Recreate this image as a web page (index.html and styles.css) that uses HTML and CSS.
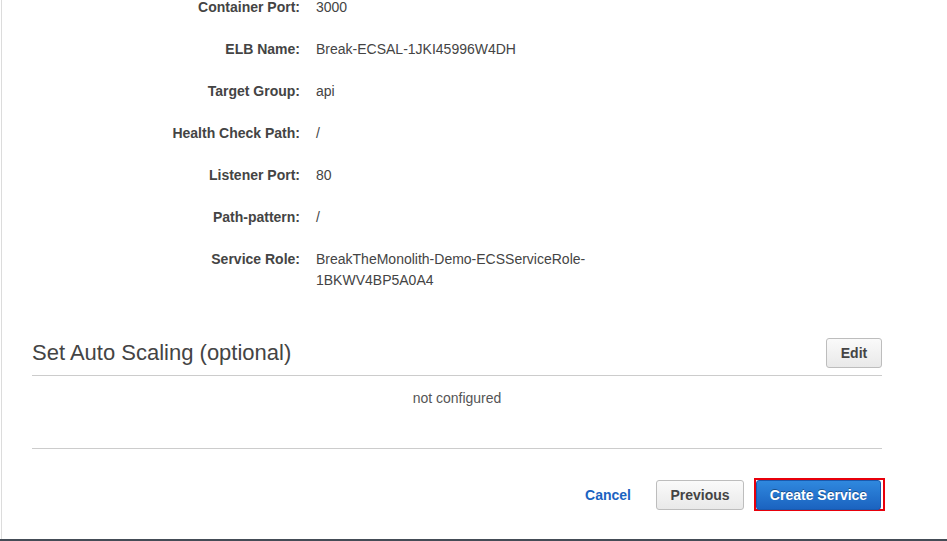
FILE: index.html
```html
<!DOCTYPE html>
<html lang="en">
<head>
<meta charset="utf-8">
<title>Review - Create Service</title>
<link rel="stylesheet" href="styles.css">
</head>
<body>
<div class="page">
  <div class="content">
    <div class="details">
      <div class="row"><div class="label">Container Port:</div><div class="value">3000</div></div>
      <div class="row"><div class="label">ELB Name:</div><div class="value">Break-ECSAL-1JKI45996W4DH</div></div>
      <div class="row"><div class="label">Target Group:</div><div class="value">api</div></div>
      <div class="row"><div class="label">Health Check Path:</div><div class="value">/</div></div>
      <div class="row"><div class="label">Listener Port:</div><div class="value">80</div></div>
      <div class="row"><div class="label">Path-pattern:</div><div class="value">/</div></div>
      <div class="row"><div class="label">Service Role:</div><div class="value">BreakTheMonolith-Demo-ECSServiceRole-1BKWV4BP5A0A4</div></div>
    </div>

    <div class="section-head">
      <h2 class="section-title">Set Auto Scaling (optional)</h2>
      <button class="btn btn-default btn-edit">Edit</button>
    </div>
    <div class="section-body">not configured</div>

    <div class="actions">
      <a class="link-cancel" href="#">Cancel</a>
      <button class="btn btn-default btn-prev">Previous</button>
      <span class="focus-ring"><button class="btn btn-primary btn-create">Create Service</button></span>
    </div>
  </div>
</div>
<div class="footer-bar"></div>
</body>
</html>
```

FILE: styles.css
```css
* { box-sizing: border-box; }

html, body {
  margin: 0;
  padding: 0;
  background: #fff;
  height: 541px;
  overflow: hidden;
}

body {
  font-family: "Liberation Sans", Arial, sans-serif;
  font-size: 14px;
  color: #444;
}

.page {
  height: 539px;
  margin-left: 1px;
  border-left: 1px solid #dcdcdc;
  overflow: hidden;
}

.content {
  margin-left: 30px;
  width: 850px;
}

.details {
  margin-top: -3px;
}

.row {
  display: flex;
  line-height: 21px;
  margin-bottom: 21px;
}

.row:last-child { margin-bottom: 0; }

.label {
  width: 268px;
  flex: none;
  text-align: right;
  font-weight: bold;
  color: #444;
}

.value {
  width: 300px;
  margin-left: 16px;
  color: #444;
}

.section-head {
  margin-top: 47px;
  display: flex;
  align-items: center;
  justify-content: space-between;
  padding-bottom: 7px;
  border-bottom: 1px solid #cccccc;
}

.section-title {
  margin: 0;
  font-size: 22px;
  font-weight: normal;
  color: #444;
  line-height: 30px;
}

.btn {
  font-family: "Liberation Sans", Arial, sans-serif;
  font-size: 14px;
  font-weight: bold;
  height: 30px;
  border-radius: 3px;
  padding: 0;
  cursor: pointer;
  line-height: 28px;
}

.btn-default {
  color: #444;
  background: linear-gradient(#fafafa, #e9e9e9);
  border: 1px solid #bdbdbd;
}

.btn-edit {
  width: 56px;
}

.section-body {
  text-align: center;
  color: #555;
  line-height: 21px;
  padding-top: 12px;
  padding-bottom: 39px;
  border-bottom: 1px solid #cccccc;
}

.actions {
  display: flex;
  justify-content: flex-end;
  align-items: center;
  margin-top: 29px;
}

.link-cancel {
  color: #1b63c1;
  font-weight: bold;
  text-decoration: none;
  margin-right: 25px;
}

.btn-prev {
  width: 88px;
  margin-right: 10px;
}

.focus-ring {
  display: flex;
  width: 131px;
  height: 33px;
  border: 2px solid #e8000b;
  margin-right: -3px;
}

.btn-create {
  width: 125px;
  color: #fff;
  background: linear-gradient(#2f88de, #1b63c0);
  border: 1px solid #1a59ad;
  text-shadow: 0 -1px 0 rgba(0, 0, 0, 0.35);
}

.footer-bar {
  height: 2px;
  background: #444c56;
}
```
